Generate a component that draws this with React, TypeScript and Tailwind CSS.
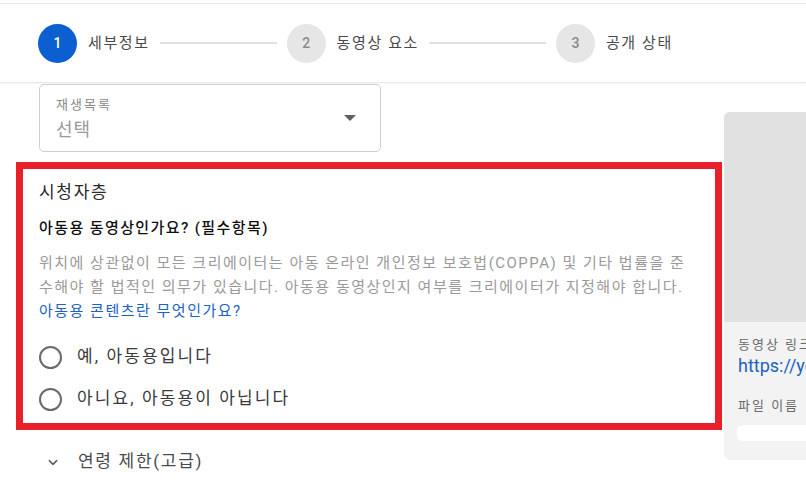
const font = { fontFamily: 'Roboto, "Noto Sans CJK KR", sans-serif' }

const steps = [
  { num: "1", label: "세부정보", active: true },
  { num: "2", label: "동영상 요소", active: false },
  { num: "3", label: "공개 상태", active: false },
]

function Stepper() {
  return (
    <div className="h-[79px] flex items-center pl-[38px] border-b border-[#e8e8e8] shadow-[0_1px_2px_rgba(0,0,0,0.04)]">
      {steps.map((s, i) => (
        <div key={s.num} className="flex items-center">
          <div
            className={
              s.active
                ? "w-[39px] h-[39px] rounded-full bg-[#0b5fd0] text-white flex items-center justify-center text-[14px] font-medium"
                : "w-[39px] h-[39px] rounded-full bg-[#e6e6e6] text-[#8a8a8a] flex items-center justify-center text-[14px] font-medium"
            }
          >
            {s.num}
          </div>
          <span className="ml-[11px] text-[15px] tracking-[1.6px] text-[#4a4a4a]">{s.label}</span>
          {i < steps.length - 1 && <div className="mx-[10px] w-[117px] h-[2px] bg-[#e0e0e0]" />}
        </div>
      ))}
    </div>
  )
}

function Radio({ label }: { label: string }) {
  return (
    <div className="h-[42px] flex items-center">
      <div className="w-[23px] h-[23px] rounded-full border-[2px] border-[#6a6a6a]" />
      <span className="ml-[15px] text-[17px] tracking-[2.1px] text-[#3a3a3a]">{label}</span>
    </div>
  )
}

export default function App() {
  return (
    <div className="w-[806px] h-[498px] overflow-hidden bg-white pt-[3px]" style={font}>
      <div className="border-t border-[#e4e4e4]">
        <Stepper />
        <div className="flex">
          <div className="w-[722px] shrink-0">
            <div className="ml-[39px] mt-[1px] w-[342px] h-[68px] rounded-[5px] border border-[#cfcfcf] flex items-center pl-[16px] pr-[24px]">
              <div className="flex-1 pt-[2px]">
                <div className="text-[13px] leading-[18px] tracking-[2px] text-[#8a8a8a]">재생목록</div>
                <div className="text-[18px] leading-[26px] tracking-[1px] text-[#9a9a9a] mt-[3px]">선택</div>
              </div>
              <svg width="12" height="6" viewBox="0 0 12 6">
                <path d="M0 0 L12 0 L6 6 Z" fill="#606060" />
              </svg>
            </div>

            <div className="ml-[16px] mt-[10px] h-[268px] border-[7px] border-[#e8202a] pl-[16px] pt-[11px]">
              <div className="text-[17px] leading-[24px] tracking-[1.7px] text-[#2a2a2a]">시청자층</div>
              <div className="mt-[12px] text-[15px] leading-[24px] tracking-[1.4px] font-medium text-[#0f0f0f]">아동용 동영상인가요? (필수항목)</div>
              <div className="mt-[11px] text-[15px] leading-[24px] text-[#9a9a9a] tracking-[1.5px] whitespace-nowrap">
                <div>위치에 상관없이 모든 크리에이터는 아동 온라인 개인정보 보호법(COPPA) 및 기타 법률을 준</div>
                <div>수해야 할 법적인 의무가 있습니다. 아동용 동영상인지 여부를 크리에이터가 지정해야 합니다.</div>
              </div>
              <div className="text-[15px] leading-[24px] text-[#1a62c8] tracking-[1.5px]">아동용 콘텐츠란 무엇인가요?</div>
              <div className="mt-[13px]">
                <Radio label="예, 아동용입니다" />
                <Radio label="아니요, 아동용이 아닙니다" />
              </div>
            </div>

            <div className="mt-[18px] ml-[46px] flex items-center h-[28px]">
              <svg width="14" height="14" viewBox="0 0 24 24" fill="none" stroke="#5a5a5a" strokeWidth="3">
                <path d="M5 9 L12 16 L19 9" />
              </svg>
              <span className="ml-[18px] text-[17px] tracking-[1.7px] text-[#4a4a4a]">연령 제한(고급)</span>
            </div>
          </div>

          <div className="ml-[2px] mt-[29px] w-[120px] h-[348px] shrink-0 rounded-l-[6px] overflow-hidden bg-[#f3f3f3]">
            <div className="h-[210px] bg-[#e1e1e1]" />
            <div className="pl-[14px] pt-[14px]">
              <div className="text-[13px] leading-[18px] tracking-[2px] text-[#6a6a6a] whitespace-nowrap">동영상 링크</div>
              <div className="text-[18px] leading-[24px] text-[#1a62c8] whitespace-nowrap">https://youtu.be</div>
              <div className="mt-[19px] text-[13px] leading-[18px] tracking-[2px] text-[#6a6a6a] whitespace-nowrap">파일 이름</div>
              <div className="mt-[10px] -ml-[1px] h-[16px] rounded-[5px] bg-white" />
            </div>
          </div>
        </div>
      </div>
    </div>
  )
}
